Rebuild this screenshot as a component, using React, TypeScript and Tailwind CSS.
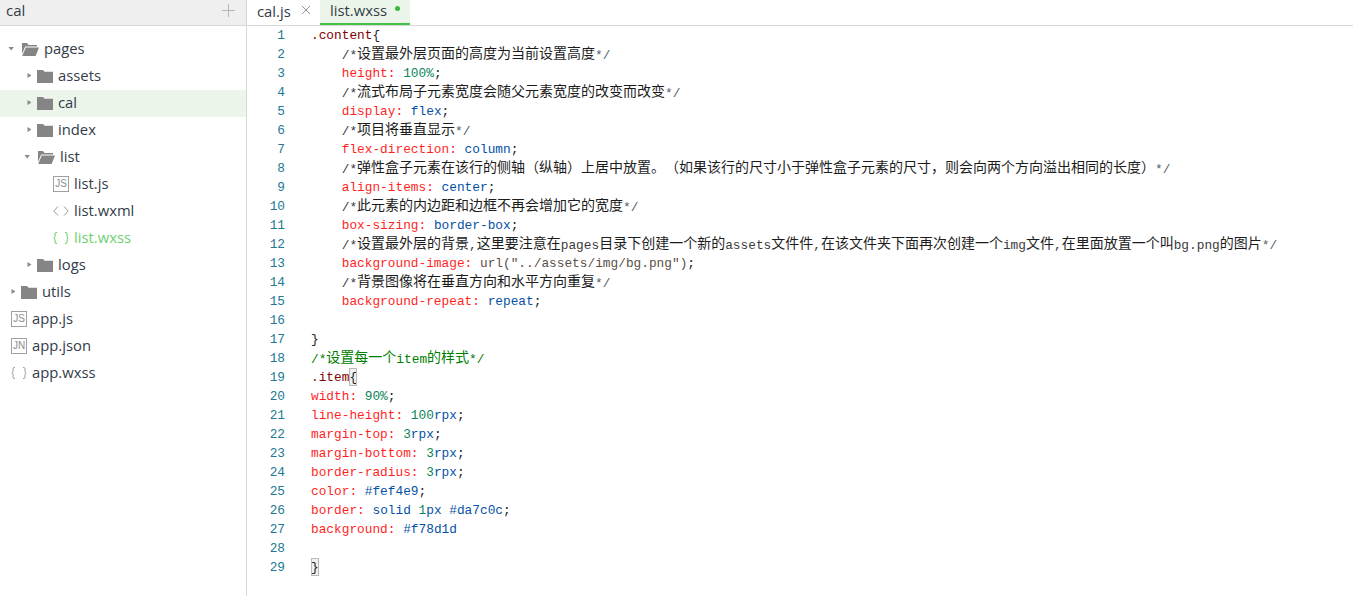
import React from 'react';

type Seg = [string, string];

const C = 'text-[#3a3a3a]';
const E = 'text-[#4f5f6a]';
const G = 'text-[#008000]';
const P = 'text-[#ff1f1f]';
const N = 'text-[#098658]';
const K = 'text-[#0451a5]';
const D = 'text-[#222222]';
const S = 'text-[#800000]';
const U = 'text-[#5a5048]';
// matched bracket highlight
const M =
  'text-[#222222] inline-block w-[7.68px] h-[18px] align-top leading-[19px] bg-[#f0f0f0] outline outline-1 -outline-offset-1 outline-[#b9b9b9]';

const prop = (name: string, rest: Seg[], indent = ''): Seg[] => [
  [P, indent + name + ':'],
  [D, ' '],
  ...rest,
];

const I = '    ';

const comment = (text: string): Seg[] => [
  [C, I + '/*' + text],
  [E, '*/'],
];

const lines: Seg[][] = [
  [[S, '.content'], [D, '{']],
  comment('设置最外层页面的高度为当前设置高度'),
  prop('height', [[N, '100%'], [D, ';']], I),
  comment('流式布局子元素宽度会随父元素宽度的改变而改变'),
  prop('display', [[K, 'flex'], [D, ';']], I),
  comment('项目将垂直显示'),
  prop('flex-direction', [[K, 'column'], [D, ';']], I),
  comment('弹性盒子元素在该行的侧轴（纵轴）上居中放置。（如果该行的尺寸小于弹性盒子元素的尺寸，则会向两个方向溢出相同的长度）'),
  prop('align-items', [[K, 'center'], [D, ';']], I),
  comment('此元素的内边距和边框不再会增加它的宽度'),
  prop('box-sizing', [[K, 'border-box'], [D, ';']], I),
  comment('设置最外层的背景,这里要注意在pages目录下创建一个新的assets文件件,在该文件夹下面再次创建一个img文件,在里面放置一个叫bg.png的图片'),
  prop('background-image', [[U, 'url("../assets/img/bg.png")'], [D, ';']], I),
  comment('背景图像将在垂直方向和水平方向重复'),
  prop('background-repeat', [[K, 'repeat'], [D, ';']], I),
  [],
  [[D, '}']],
  [[G, '/*设置每一个item的样式*/']],
  [[S, '.item'], [M, '{']],
  prop('width', [[N, '90%'], [D, ';']]),
  prop('line-height', [[N, '100'], [K, 'rpx'], [D, ';']]),
  prop('margin-top', [[N, '3'], [K, 'rpx'], [D, ';']]),
  prop('margin-bottom', [[N, '3'], [K, 'rpx'], [D, ';']]),
  prop('border-radius', [[N, '3'], [K, 'rpx'], [D, ';']]),
  prop('color', [[K, '#fef4e9'], [D, ';']]),
  prop('border', [[K, 'solid '], [N, '1'], [K, 'px #da7c0c'], [D, ';']]),
  prop('background', [[K, '#f78d1d']]),
  [],
  [[M, '}']],
];

// CJK runs are set larger than the latin mono, as the editor font does
const CodeText = ({ text, dark }: { text: string; dark: boolean }) => (
  <>
    {text.split(/([\u3000-\u9fff\uff00-\uffef]+)/).map((part, i) =>
      i % 2 === 1 ? (
        <span
          key={i}
          className={`text-[14px] leading-none align-[1px] [text-spacing-trim:space-all] font-['Noto_Sans_CJK_SC',sans-serif] ${dark ? 'text-[#1c1c1c]' : ''}`}
        >
          {part}
        </span>
      ) : (
        part
      )
    )}
  </>
);

const Caret = ({ open }: { open?: boolean }) => (
  <svg width="7" height="7" viewBox="0 0 7 7" className="shrink-0">
    {open ? <path d="M0.5 2h5.5L3.2 5.5z" fill="#8a8a8a" /> : <path d="M1.5 1v5l4-2.5z" fill="#8a8a8a" />}
  </svg>
);

const Folder = ({ open }: { open?: boolean }) =>
  open ? (
    <svg width="18" height="14" viewBox="0 0 18 14" className="shrink-0">
      <path d="M0 1h6l1.5 2H16v1.4H4.2L1 12V1z" fill="#858585" />
      <path d="M4.8 5.4H18L14.6 14H1.2z" fill="#858585" />
    </svg>
  ) : (
    <svg width="16" height="14" viewBox="0 0 16 14" className="shrink-0">
      <path d="M0 1h6l1.5 1.7H16V14H0z" fill="#858585" />
    </svg>
  );

const Badge = ({ label }: { label: string }) => (
  <span className="w-[16px] h-[16px] shrink-0 border border-[#a0a0a0] flex items-center justify-center text-[10px] leading-none text-[#8c8c8c] font-['Liberation_Sans',sans-serif]">
    {label}
  </span>
);

const Braces = ({ color }: { color: string }) => (
  <svg width="16" height="12" viewBox="0 0 16 12" fill="none" stroke={color} strokeWidth="1" className="shrink-0">
    <path d="M4 0.5H3Q2 0.5 2 2V4.5Q2 5.7 0.8 6Q2 6.3 2 7.5V10Q2 11.5 3 11.5H4" />
    <path d="M12 0.5H13Q14 0.5 14 2V4.5Q14 5.7 15.2 6Q14 6.3 14 7.5V10Q14 11.5 13 11.5H12" />
  </svg>
);

const Chevrons = () => (
  <svg width="16" height="10" viewBox="0 0 16 10" fill="none" stroke="#9a9a9a" strokeWidth="1" className="shrink-0">
    <path d="M5 0.5L0.8 5L5 9.5" />
    <path d="M11 0.5L15.2 5L11 9.5" />
  </svg>
);

type Row = {
  name: string;
  pad: string;
  kind: 'open' | 'closed' | 'js' | 'jn' | 'xml' | 'css' | 'cssActive';
  active?: boolean;
};

const rows: Row[] = [
  { name: 'pages', pad: 'pl-[8px]', kind: 'open' },
  { name: 'assets', pad: 'pl-[26px]', kind: 'closed' },
  { name: 'cal', pad: 'pl-[26px]', kind: 'closed', active: true },
  { name: 'index', pad: 'pl-[26px]', kind: 'closed' },
  { name: 'list', pad: 'pl-[24px]', kind: 'open' },
  { name: 'list.js', pad: 'pl-[53px]', kind: 'js' },
  { name: 'list.wxml', pad: 'pl-[53px]', kind: 'xml' },
  { name: 'list.wxss', pad: 'pl-[53px]', kind: 'cssActive' },
  { name: 'logs', pad: 'pl-[26px]', kind: 'closed' },
  { name: 'utils', pad: 'pl-[10px]', kind: 'closed' },
  { name: 'app.js', pad: 'pl-[11px]', kind: 'js' },
  { name: 'app.json', pad: 'pl-[11px]', kind: 'jn' },
  { name: 'app.wxss', pad: 'pl-[11px]', kind: 'css' },
];

const TreeRow = ({ row }: { row: Row }) => {
  const isFolder = row.kind === 'open' || row.kind === 'closed';
  return (
    <div className={`h-[27px] flex items-center pb-[2px] ${row.pad} ${row.active ? 'bg-[#ecf5ea]' : ''}`}>
      {isFolder && (
        <>
          <Caret open={row.kind === 'open'} />
          <span className={row.kind === 'open' ? 'w-[6px] shrink-0' : 'w-[4px] shrink-0'} />
          <Folder open={row.kind === 'open'} />
          <span className="w-[5px] shrink-0" />
        </>
      )}
      {row.kind === 'js' && <Badge label="JS" />}
      {row.kind === 'jn' && <Badge label="JN" />}
      {row.kind === 'xml' && <Chevrons />}
      {row.kind === 'css' && <Braces color="#a0a0a0" />}
      {row.kind === 'cssActive' && <Braces color="#5fcf5f" />}
      {!isFolder && <span className="w-[5px] shrink-0" />}
      <span className={`text-[14.8px] leading-none ${row.kind === 'cssActive' ? 'text-[#6fd06f]' : 'text-[#333c48]'}`}>
        {row.name}
      </span>
    </div>
  );
};

export default function App() {
  return (
    <div className="w-[1353px] h-[596px] overflow-hidden bg-white flex font-['Open_Sans',sans-serif]">
      <aside className="w-[247px] shrink-0 border-r border-[#d9d9d9] flex flex-col">
        <div className="h-[26px] shrink-0 bg-[#efefef] border-b border-[#d9d9d9] flex items-center justify-between pl-[6px] pr-[11px] pb-[4px]">
          <span className="text-[15px] leading-none text-[#333c48]">cal</span>
          <svg width="13" height="13" viewBox="0 0 13 13">
            <path d="M6.5 0v13M0 6.5h13" stroke="#b4b4b4" strokeWidth="1" />
          </svg>
        </div>
        <div className="pt-[10px]">
          {rows.map((row) => (
            <TreeRow key={row.name} row={row} />
          ))}
        </div>
      </aside>

      <main className="flex-1 flex flex-col min-w-0">
        <div className="h-[26px] shrink-0 border-b border-[#d9d9d9] flex">
          <div className="w-[73px] h-[25px] flex items-center pl-[10px] gap-[10px]">
            <span className="text-[14.8px] leading-none text-[#333c48] -mt-[3px]">cal.js</span>
            <svg width="10" height="10" viewBox="0 0 10 10" className="-mt-[6px]">
              <path d="M1 1l8 8M9 1l-8 8" stroke="#8f8f8f" strokeWidth="1" />
            </svg>
          </div>
          <div className="w-[90px] h-[25px] bg-[#ecf5ea] border-b-2 border-[#44c144] flex items-center pl-[10px] gap-[8px]">
            <span className="text-[14.8px] leading-none text-[#333c48] -mt-[2px]">list.wxss</span>
            <span className="w-[5px] h-[5px] rounded-full bg-[#3bb83b] -mt-[6px]" />
          </div>
        </div>
        <div className="flex text-[12.8px] leading-[19px] font-['Liberation_Mono',monospace]">
          <div className="w-[38px] shrink-0 text-right text-[#237893]">
            {lines.map((_, i) => (
              <div key={i} className="h-[19px]">
                {i + 1}
              </div>
            ))}
          </div>
          <div className="pl-[26px] whitespace-pre">
            {lines.map((segs, i) => (
              <div key={i} className="h-[19px]">
                {segs.map(([color, text], j) => (
                  <span key={j} className={color}>
                    <CodeText text={text} dark={color === C} />
                  </span>
                ))}
              </div>
            ))}
          </div>
        </div>
      </main>
    </div>
  );
}
